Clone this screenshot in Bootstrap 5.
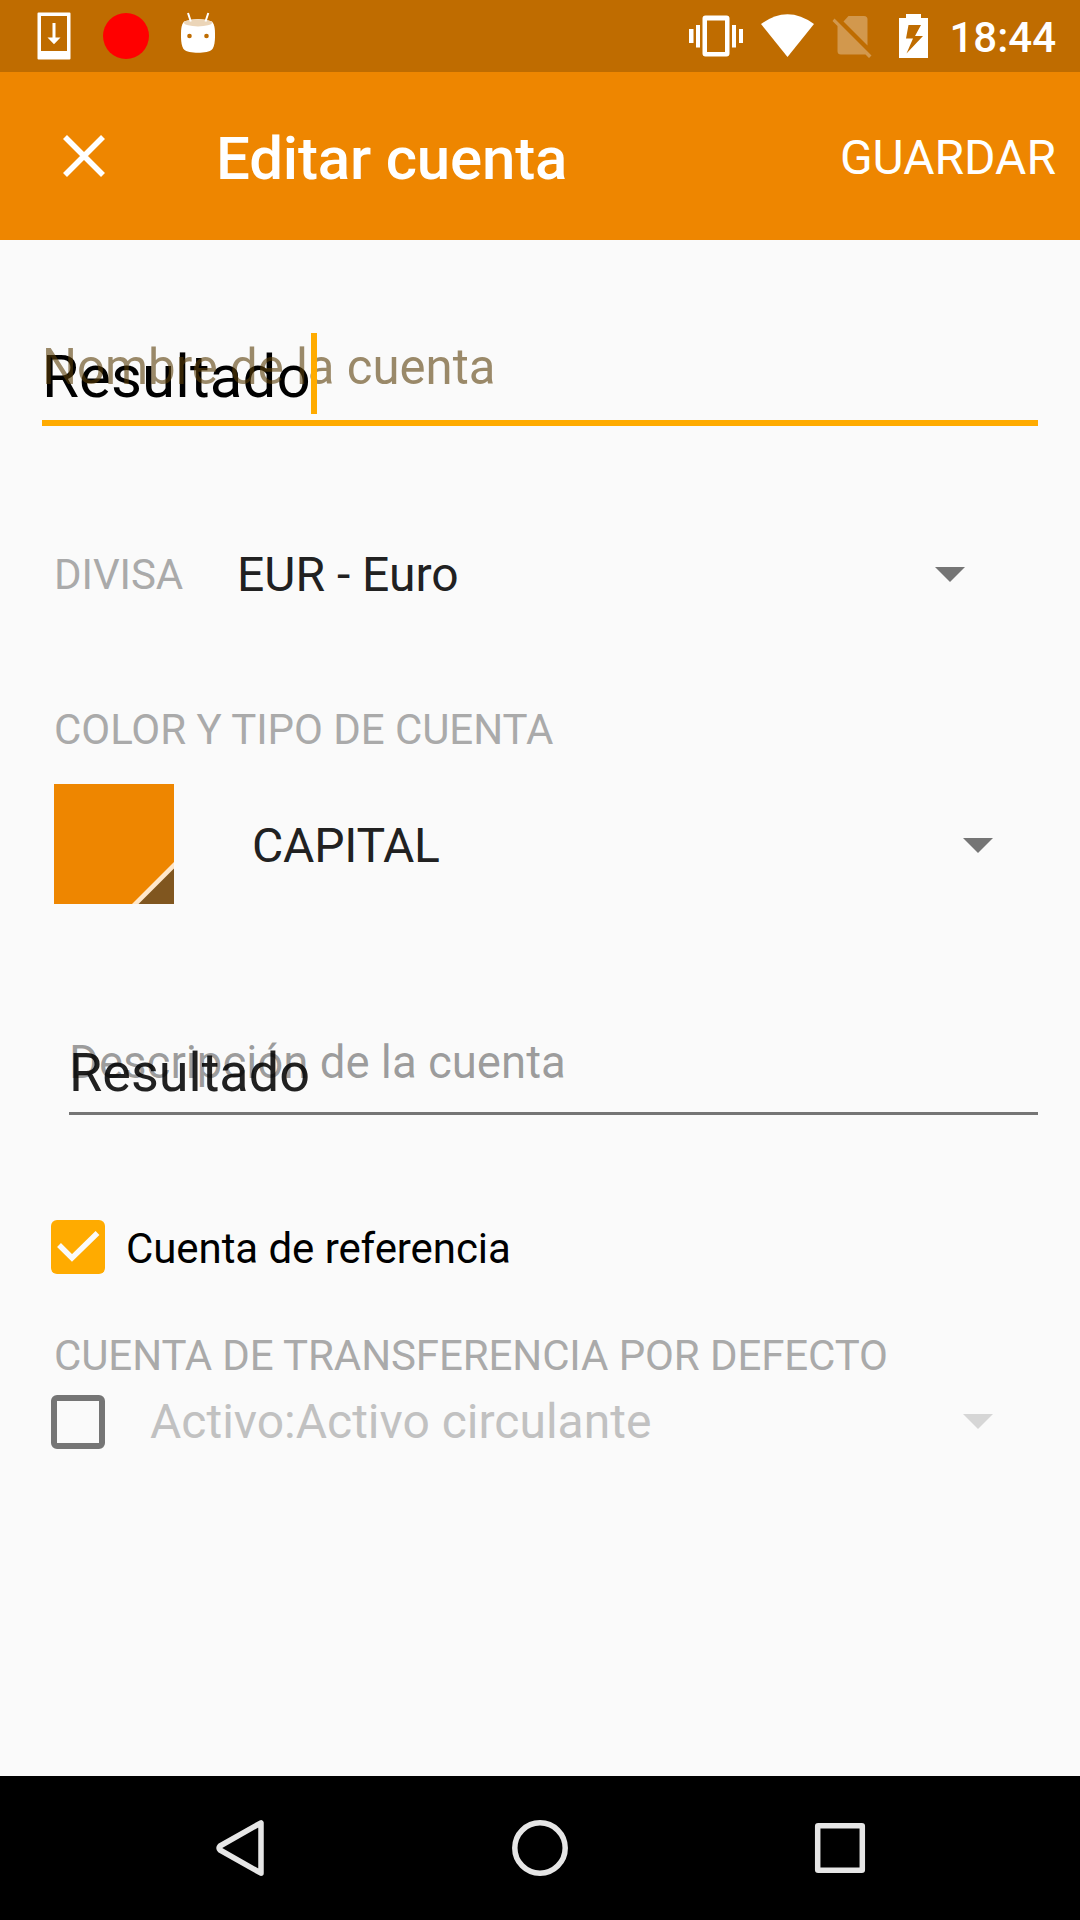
<!DOCTYPE html>
<html lang="es">
<head>
<meta charset="utf-8">
<meta name="viewport" content="width=device-width, initial-scale=1">
<title>Editar cuenta</title>
<link href="https://cdn.jsdelivr.net/npm/bootstrap@5.3.0/dist/css/bootstrap.min.css" rel="stylesheet">
<style>
body{font-family:Roboto,"Noto Sans",sans-serif;background:#fafafa;color:#212121;font-size:48px;line-height:56px}
.screen{height:1920px;overflow:hidden}
svg{display:block;flex:none}
.statusbar{height:72px;background:#bf6c00;padding:0 24px 0 36px}
.clock{font-size:42px;font-weight:500;line-height:50px;margin-left:20px;padding-top:3px}
.appbar{height:168px;background:#ee8600;padding:0 24px 0 60px}
.appbar h1{font-size:60px;font-weight:500;line-height:70px;letter-spacing:-.17px;margin:5px 0 0 108px}
.save{line-height:56px;padding-top:3px}
.field-name{margin:93px 42px 0;height:93px;border-bottom:6px solid #ffab00;color:#000;font-size:60px;line-height:87px}
.field-name .typed{letter-spacing:.12px}
.field-name .hint{font-size:49.1px;line-height:68px;color:rgba(90,62,8,.6)}
.caret-bar{width:6px;height:81px;background:#ffab00;z-index:1}
.field-desc{margin:130px 42px 0 69px;height:81px;border-bottom:3px solid #757575;font-size:54px;line-height:77px}
.field-desc .hint{font-size:45.600px;line-height:58px;letter-spacing:-.03px;color:rgba(0,0,0,.38)}
.hint{top:0;left:0;white-space:nowrap}
.caption{font-size:42px;line-height:49px;letter-spacing:-.05px;color:#aaa}
.row-currency{height:73px;margin:112px 115px 0 54px}
.row-currency .caption{width:183px}
.cap-color{margin:94px 0 0 54px}
.row-type{height:120px;margin:30px 87px 0 54px}
.type-select{padding:3px 0 0 78px;letter-spacing:-.2px}
.row-check{height:54px;margin:105px 87px 0 51px;font-size:42px;letter-spacing:-.07px;color:#000}
.row-check span{margin:3px 0 0 21px}
.cap-transfer{margin:57px 0 0 54px;letter-spacing:-.1px}
.row-transfer{height:54px;margin:15px 87px 0 51px;color:#c1c1c1}
.row-transfer span{margin-left:45px}
.row-transfer svg{margin-bottom:2px}
.box{width:54px;height:54px;border-radius:6px;flex:none}
.box-on{background:#ffab00}
.box-off{border:6px solid #757575}
.softkeys{height:144px}
</style>
<script src="https://cdn.jsdelivr.net/npm/bootstrap@5.3.0/dist/js/bootstrap.bundle.min.js"></script>
</head>
<body>
<div class="screen d-flex flex-column">
  <div class="statusbar d-flex align-items-center text-white flex-shrink-0">
    <svg width="184" height="72" viewBox="36 0 184 72">
      <path fill="#fff" fill-rule="evenodd" d="M38.5 12.5h31a1 1 0 0 1 1 1v45a1 1 0 0 1-1 1h-31a1 1 0 0 1-1-1v-45a1 1 0 0 1 1-1zM41 16v35h26V16zM52.5 23h3v14.500h5L54 44.300l-6.500-6.800h5z"/>
      <circle cx="126" cy="36" r="23" fill="red"/>
      <path fill="#fff" d="M184 21.500q14-5 28 0c3 3.500 3 9 3 14s-.4 11-3 14c-4 4.400-24 4.400-28 0-2.600-3-3-9-3-14s0-10.500 3-14z"/>
      <ellipse cx="198" cy="22.800" rx="14" ry="3.600" fill="#ebd5b8"/>
      <path stroke="#fff" stroke-width="2" d="M188 13l2.800 8.500M208.300 13l-2.800 8.500"/>
      <g fill="#bf6c00"><circle cx="189.500" cy="36" r="2.300"/><circle cx="206.500" cy="36" r="2.300"/></g>
    </svg>
    <svg class="ms-auto" width="240" height="72" viewBox="689 0 240 72">
      <g fill="#fff">
        <path fill-rule="evenodd" d="M705.500 15.500h21a3 3 0 0 1 3 3v35a3 3 0 0 1-3 3h-21a3 3 0 0 1-3-3v-35a3 3 0 0 1 3-3zM707 20.500V52h18V20.500z"/>
        <path d="M689 29h4.500v14H689zM696 25h4v22.500h-4zM732 25h4v22.500h-4zM739 29h4v14h-4z"/>
        <path d="M761 24q26.500-19.500 53 0l-26.500 33z"/>
        <path fill-rule="evenodd" d="M906 14h15v4h7v40h-29V18h7zM908.500 25l-2.500 13.500h7l-6.500 15L923 36h-8l6-11z"/>
      </g>
      <g fill="#fff" fill-opacity=".3">
        <path d="M843.500 21.500l5-5.500H864q3.500 0 3.500 3.500v26z"/>
        <path d="M834.500 18.500L832.500 21l5 5v25q0 3.500 3.500 3.500h24.500l3.500 3.500 2.500-2.500z"/>
      </g>
    </svg>
    <span class="clock">18:44</span>
  </div>
  <header class="appbar d-flex align-items-center text-white flex-shrink-0">
    <svg width="48" height="48" viewBox="0 0 48 48" stroke="#fff" stroke-width="5.600"><path d="M5 5l38 38M43 5L5 43"/></svg>
    <h1>Editar cuenta</h1>
    <span class="save ms-auto">GUARDAR</span>
  </header>
  <main class="flex-grow-1">
    <div class="field-name position-relative d-flex">
      <span class="typed">Resultado</span><span class="caret-bar"></span>
      <span class="hint position-absolute">Nombre de la cuenta</span>
    </div>
    <div class="row-currency d-flex align-items-center">
      <span class="caption">DIVISA</span>
      <span>EUR - Euro</span>
      <svg class="ms-auto" width="30" height="15"><path fill="#757575" d="M0 0h30L15 15z"/></svg>
    </div>
    <div class="caption cap-color">COLOR Y TIPO DE CUENTA</div>
    <div class="row-type d-flex">
      <svg width="120" height="120"><path fill="#ee8600" d="M0 0h120v120H0z"/><path fill="#ffe8cb" d="M120 78v42H78z"/><path fill="#80561f" d="M120 84.500V120H84.500z"/></svg>
      <div class="type-select d-flex flex-grow-1 align-items-center">
        <span>CAPITAL</span>
        <svg class="ms-auto" width="30" height="15"><path fill="#757575" d="M0 0h30L15 15z"/></svg>
      </div>
    </div>
    <div class="field-desc position-relative">
      <span>Resultado</span>
      <span class="hint position-absolute">Descripción de la cuenta</span>
    </div>
    <div class="row-check d-flex align-items-center">
      <div class="box box-on"><svg width="54" height="54" fill="none" stroke="#fafafa" stroke-width="5.500"><path d="M8 25l13 13 25.500-25"/></svg></div>
      <span>Cuenta de referencia</span>
    </div>
    <div class="caption cap-transfer">CUENTA DE TRANSFERENCIA POR DEFECTO</div>
    <div class="row-transfer d-flex align-items-center">
      <div class="box box-off"></div>
      <span>Activo:Activo circulante</span>
      <svg class="ms-auto" width="30" height="15"><path fill="#d6d6d6" d="M0 0h30L15 15z"/></svg>
    </div>
  </main>
  <nav class="softkeys bg-black flex-shrink-0">
    <svg width="1080" height="144" fill="none" stroke="#e6e6e6" stroke-width="5.500" stroke-linejoin="round">
      <path d="M261 46.800v50.400L220 74q-2-2 0-4z"/>
      <circle cx="540" cy="72" r="25.200"/>
      <rect x="817.700" y="49.700" width="44.600" height="44.600" rx=".5"/>
    </svg>
  </nav>
</div>
</body>
</html>
